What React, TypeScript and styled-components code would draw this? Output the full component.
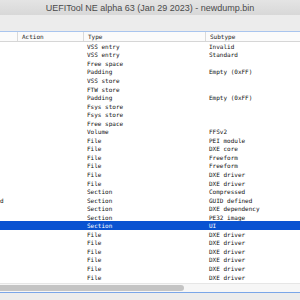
import React from "react";
import styled, { createGlobalStyle } from "styled-components";

const GlobalStyle = createGlobalStyle`
  html, body {
    margin: 0;
    padding: 0;
    width: 300px;
    height: 300px;
    overflow: hidden;
    background: #ececec;
  }
`;

const Window = styled.div`
  display: flex;
  flex-direction: column;
  width: 300px;
  height: 300px;
  overflow: hidden;
`;

const TitleBar = styled.div`
  height: 15px;
  flex: none;
  display: flex;
  align-items: center;
  justify-content: center;
  background: linear-gradient(#e4e4e4, #d8d8d8);
  font-family: "Liberation Sans", Arial, sans-serif;
  font-size: 9px;
  color: #4a4a4a;
  white-space: nowrap;
`;

const Band = styled.div<{ h: number }>`
  height: ${(p) => p.h}px;
  flex: none;
  background: #ececec;
`;

const TreeFrame = styled.div`
  flex: none;
  display: flex;
  flex-direction: column;
  height: 260px;
  border-top: 1px solid #a9c5ee;
  border-bottom: 1px solid #7aa6e8;
  background: #ffffff;
  font-family: "DejaVu Sans Mono", "Liberation Mono", monospace;
  font-size: 6px;
`;

const Header = styled.div`
  display: flex;
  height: 9px;
  flex: none;
  background: #fbfbfb;
  border-bottom: 1px solid #d6d6d6;
  color: #1a1a1a;
`;

const Body = styled.div`
  flex: 1;
  overflow: hidden;
`;

const Row = styled.div<{ selected?: boolean }>`
  display: flex;
  height: 8.55px;
  align-items: center;
  background: ${(p) => (p.selected ? "#0a52d1" : "transparent")};
  color: ${(p) => (p.selected ? "#ffffff" : "#111111")};
`;

const Cell = styled.div<{ w: number; sep?: boolean }>`
  flex: none;
  width: ${(p) => p.w}px;
  height: 100%;
  display: flex;
  align-items: center;
  box-sizing: border-box;
  padding-left: 4px;
  white-space: nowrap;
  overflow: hidden;
  border-left: ${(p) => (p.sep ? "1px solid #dadada" : "none")};
`;

const NameCell = styled.div`
  flex: none;
  width: 17px;
  height: 100%;
  display: flex;
  align-items: center;
  white-space: nowrap;
  overflow: hidden;
`;

const HScroll = styled.div`
  height: 8px;
  flex: none;
  background: #f6f6f6;
  border-top: 1px solid #e6e6e6;
  display: flex;
  align-items: center;
`;

const Thumb = styled.div`
  width: 190px;
  height: 6px;
  margin-left: -6px;
  border-radius: 3px;
  background: #c4c4c4;
`;

type Item = { name?: string; type: string; subtype?: string; selected?: boolean };

const items: Item[] = [
  { type: "VSS entry", subtype: "Invalid" },
  { type: "VSS entry", subtype: "Standard" },
  { type: "Free space" },
  { type: "Padding", subtype: "Empty (0xFF)" },
  { type: "VSS store" },
  { type: "FTW store" },
  { type: "Padding", subtype: "Empty (0xFF)" },
  { type: "Fsys store" },
  { type: "Fsys store" },
  { type: "Free space" },
  { type: "Volume", subtype: "FFSv2" },
  { type: "File", subtype: "PEI module" },
  { type: "File", subtype: "DXE core" },
  { type: "File", subtype: "Freeform" },
  { type: "File", subtype: "Freeform" },
  { type: "File", subtype: "DXE driver" },
  { type: "File", subtype: "DXE driver" },
  { type: "Section", subtype: "Compressed" },
  { name: "d", type: "Section", subtype: "GUID defined" },
  { type: "Section", subtype: "DXE dependency" },
  { type: "Section", subtype: "PE32 image" },
  { type: "Section", subtype: "UI", selected: true },
  { type: "File", subtype: "DXE driver" },
  { type: "File", subtype: "DXE driver" },
  { type: "File", subtype: "DXE driver" },
  { type: "File", subtype: "DXE driver" },
  { type: "File", subtype: "DXE driver" },
  { type: "File", subtype: "DXE driver" },
];

const App: React.FC = () => {
  return (
    <>
      <GlobalStyle />
      <Window>
        <TitleBar>UEFITool NE alpha 63 (Jan 29 2023) - newdump.bin</TitleBar>
        <Band h={16} />
        <TreeFrame>
          <Header>
            <NameCell />
            <Cell w={66} sep>
              Action
            </Cell>
            <Cell w={122} sep>
              Type
            </Cell>
            <Cell w={95} sep>
              Subtype
            </Cell>
          </Header>
          <Body>
            {items.map((it, i) => (
              <Row key={i} selected={it.selected}>
                <NameCell>{it.name}</NameCell>
                <Cell w={66} />
                <Cell w={122}>{it.type}</Cell>
                <Cell w={95}>{it.subtype}</Cell>
              </Row>
            ))}
          </Body>
          <HScroll>
            <Thumb />
          </HScroll>
        </TreeFrame>
        <Band h={8} />
      </Window>
    </>
  );
};

export default App;
